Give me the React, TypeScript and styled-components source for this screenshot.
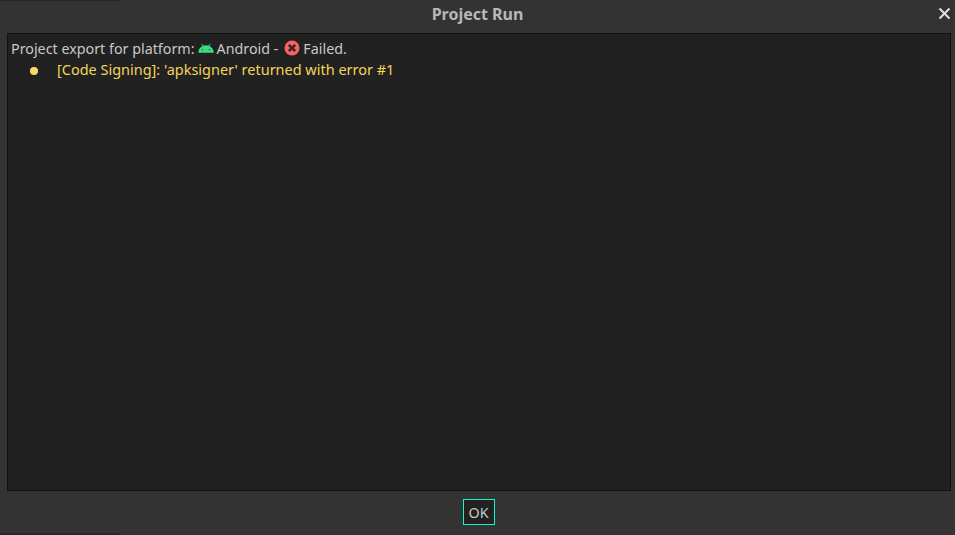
import styled, { createGlobalStyle } from 'styled-components'

const GlobalStyle = createGlobalStyle`
  html, body {
    margin: 0;
    padding: 0;
    background: #333333;
  }
`

const Dialog = styled.div`
  width: 955px;
  height: 535px;
  background: #333333;
  color: #c8c8c8;
  font-family: "Noto Sans", sans-serif;
  font-size: 14.3px;
  line-height: 19px;
  display: flex;
  flex-direction: column;
  position: relative;
  overflow: hidden;

  /* bits of the window behind the dialog, showing at the edges */
  &::before,
  &::after {
    content: '';
    position: absolute;
    left: 0;
    width: 120px;
    background: #262626;
  }
  &::before {
    top: 0;
    height: 1px;
  }
  &::after {
    bottom: 0;
    height: 2px;
  }
`

const TitleBar = styled.div`
  height: 33px;
  flex-shrink: 0;
  display: flex;
  align-items: center;
  justify-content: center;
  padding-bottom: 4px;
  box-sizing: border-box;
  font-weight: 700;
  font-size: 16px;
  color: #b8b8b8;
`

const CloseButton = styled.svg`
  position: absolute;
  top: 7px;
  right: 4px;
  width: 13px;
  height: 13px;
`

const Body = styled.div`
  flex: 1;
  margin: 0 4px 0 7px;
  background: #212121;
  border: 1px solid #111111;
  padding: 3px 3px;
  min-height: 0;
`

const Line = styled.div`
  display: flex;
  align-items: center;
  height: 22px;
  white-space: pre;
`

const Icon = styled.svg<{ $left: number }>`
  width: 16px;
  height: 16px;
  margin: 0 3px 0 ${({ $left }) => $left}px;
  flex-shrink: 0;
`

const Item = styled.div`
  display: flex;
  align-items: center;
  height: 20px;
  color: #f5d45c;
  font-size: 14.47px;
`

const Bullet = styled.span`
  width: 8px;
  height: 8px;
  border-radius: 50%;
  background: #ffd966;
  margin: 3px 19px 0 19px;
`

const Footer = styled.div`
  height: 44px;
  flex-shrink: 0;
  display: flex;
  justify-content: center;
  padding: 8px 0 0 2px;
  box-sizing: border-box;
`

const OkButton = styled.button`
  width: 32px;
  height: 26px;
  padding: 0;
  background: #212121;
  border: 1px solid #19f5c8;
  color: #c8c8c8;
  font: inherit;
`

export default function App() {
  return (
    <>
      <GlobalStyle />
      <Dialog>
        <TitleBar>Project Run</TitleBar>
        <CloseButton viewBox="0 0 13 13">
          <path d="M1.5 1.5 L11.5 11.5 M11.5 1.5 L1.5 11.5" stroke="#e0e0e0" strokeWidth="2" fill="none" />
        </CloseButton>
        <Body>
          <Line>
            Project export for platform:
            <Icon $left={3} viewBox="0 0 16 16">
              <path d="M0.3 12.7 C0.6 8 4 5.2 8 5.2 C12 5.2 15.4 8 15.7 12.7 Z" fill="#3ddc84" />
              <path d="M3.8 3.8 L5.3 6.3 M12.2 3.8 L10.7 6.3" stroke="#3ddc84" strokeWidth="1" />
              <circle cx="4.6" cy="9.6" r="0.6" fill="#212121" />
              <circle cx="11.4" cy="9.6" r="0.6" fill="#212121" />
            </Icon>
            Android -
            <Icon $left={6} viewBox="0 0 16 16">
              <circle cx="8" cy="8" r="7.5" fill="#ff5f5f" />
              <path d="M4.8 4.8 L11.2 11.2 M11.2 4.8 L4.8 11.2" stroke="#2b2b2b" strokeWidth="2.6" />
            </Icon>
            Failed.
          </Line>
          <Item>
            <Bullet />
            [Code Signing]: 'apksigner' returned with error #1
          </Item>
        </Body>
        <Footer>
          <OkButton>OK</OkButton>
        </Footer>
      </Dialog>
    </>
  )
}
